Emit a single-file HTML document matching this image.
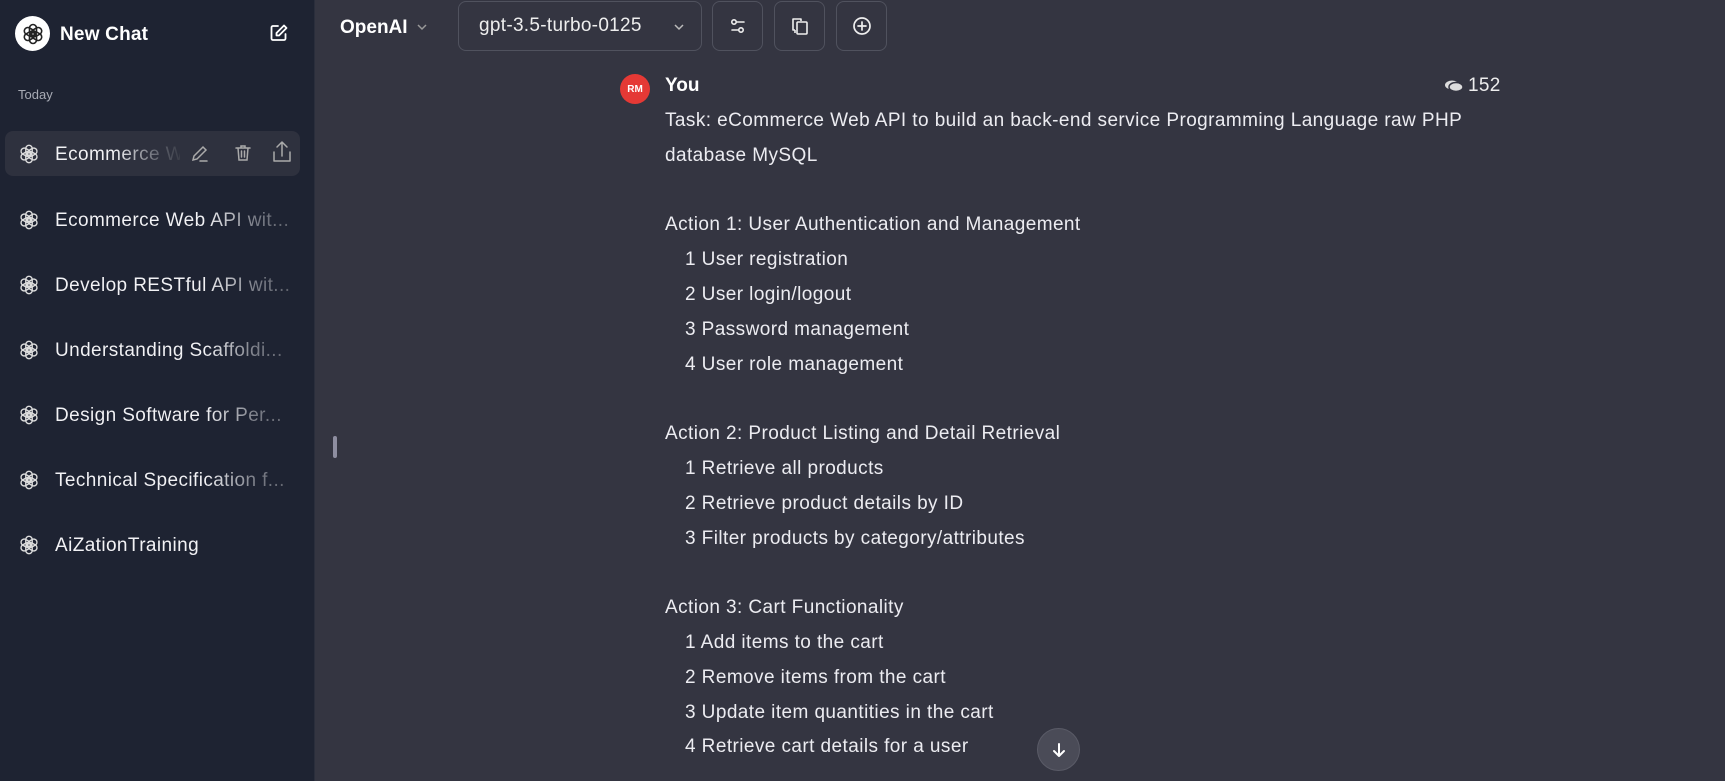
<!DOCTYPE html>
<html><head><meta charset="utf-8"><style>
*{box-sizing:border-box;margin:0;padding:0}
body{width:1725px;height:781px;overflow:hidden;background:#343541;font-family:"Liberation Sans",sans-serif;color:#ececf1;position:relative}
#side{position:absolute;left:0;top:0;width:315px;height:781px;background:#1e2332;border-right:1px solid #2a2e3c}
.logo{position:absolute;left:15px;top:16px;width:35px;height:35px;border-radius:50%;background:#fff;display:flex;align-items:center;justify-content:center}
.nc{position:absolute;left:60px;top:24px;font-size:19px;font-weight:bold;color:#fff;letter-spacing:0.2px}
.today{position:absolute;left:18px;top:87px;font-size:13px;color:#a8abb5}
.item{position:absolute;left:5px;width:295px;height:45px;border-radius:8px}
.item.act{background:#2e313e}
.item svg.oi{position:absolute;left:13px;top:12px}
.item .t{position:absolute;left:50px;top:13px;font-size:19px;letter-spacing:0.4px;white-space:nowrap;width:245px;overflow:hidden;background:linear-gradient(90deg,#f2f2f5 0,#f2f2f5 150px,#7b7e88 200px,#5b5e68 240px);-webkit-background-clip:text;background-clip:text;color:transparent}
.btn{position:absolute;top:1px;height:50px;border:1px solid #50525e;border-radius:8px;display:flex;align-items:center;justify-content:center}
.msg{position:absolute;left:665px;top:104px;font-size:19px;letter-spacing:0.42px;line-height:34.8px;color:#ececf1;white-space:pre}
.msg .i{padding-left:20px}
</style></head><body>
<div id="side">
 <div class="logo"><svg width="24" height="24" viewBox="0 0 24 24" fill="none" stroke="#222" stroke-width="1.6"><g id="g"><rect x="8.5" y="2.5" width="7" height="11" rx="3.5"/></g><use href="#g" transform="rotate(60 12 12)"/><use href="#g" transform="rotate(120 12 12)"/><use href="#g" transform="rotate(180 12 12)"/><use href="#g" transform="rotate(240 12 12)"/><use href="#g" transform="rotate(300 12 12)"/></svg></div>
 <div class="nc">New Chat</div>
 <svg style="position:absolute;left:269px;top:23px" width="20" height="20" viewBox="0 0 20 20" fill="none" stroke="#fff" stroke-width="1.8" stroke-linecap="round" stroke-linejoin="round"><path d="M9 3H4a1.5 1.5 0 0 0-1.5 1.5v11A1.5 1.5 0 0 0 4 17h11a1.5 1.5 0 0 0 1.5-1.5V11"/><path d="M15 2.5l2.5 2.5-7.5 7.5H7.5V10z"/></svg>
 <div class="today">Today</div>

 <div class="item act" style="top:131px"><svg class="oi" width="22" height="22" viewBox="0 0 24 24" fill="none" stroke="#ddd" stroke-width="1.5"><use href="#g"/><use href="#g" transform="rotate(60 12 12)"/><use href="#g" transform="rotate(120 12 12)"/><use href="#g" transform="rotate(180 12 12)"/><use href="#g" transform="rotate(240 12 12)"/><use href="#g" transform="rotate(300 12 12)"/></svg><div class="t" style="width:125px;background:linear-gradient(90deg,#f2f2f5 0,#f2f2f5 60px,#6b6e78 100px,#3a3d48 125px);-webkit-background-clip:text;background-clip:text">Ecommerce Web</div>
  <svg style="position:absolute;left:185px;top:13px" width="20" height="20" viewBox="0 0 20 20" fill="none" stroke="#aaa" stroke-width="1.5" stroke-linecap="round"><path d="M3 16l1-4 9-9 3 3-9 9z"/><path d="M10 17h7"/></svg>
  <svg style="position:absolute;left:228px;top:12px" width="20" height="20" viewBox="0 0 20 20" fill="none" stroke="#aaa" stroke-width="1.5" stroke-linecap="round"><path d="M3 5h14M8 5V3h4v2M5 5l1 12h8l1-12M8.5 8v6M11.5 8v6"/></svg>
  <svg style="position:absolute;left:266px;top:9px" width="22" height="24" viewBox="0 0 22 24" fill="none" stroke="#aaa" stroke-width="1.5" stroke-linecap="round" stroke-linejoin="round"><path d="M11 2v14M6 7l5-5 5 5M3 12v9h16v-9"/></svg>
 </div>
 <div class="item" style="top:197px"><svg class="oi" width="22" height="22" viewBox="0 0 24 24" fill="none" stroke="#ddd" stroke-width="1.5"><use href="#g"/><use href="#g" transform="rotate(60 12 12)"/><use href="#g" transform="rotate(120 12 12)"/><use href="#g" transform="rotate(180 12 12)"/><use href="#g" transform="rotate(240 12 12)"/><use href="#g" transform="rotate(300 12 12)"/></svg><div class="t">Ecommerce Web API wit...</div></div>
 <div class="item" style="top:262px"><svg class="oi" width="22" height="22" viewBox="0 0 24 24" fill="none" stroke="#ddd" stroke-width="1.5"><use href="#g"/><use href="#g" transform="rotate(60 12 12)"/><use href="#g" transform="rotate(120 12 12)"/><use href="#g" transform="rotate(180 12 12)"/><use href="#g" transform="rotate(240 12 12)"/><use href="#g" transform="rotate(300 12 12)"/></svg><div class="t">Develop RESTful API wit...</div></div>
 <div class="item" style="top:327px"><svg class="oi" width="22" height="22" viewBox="0 0 24 24" fill="none" stroke="#ddd" stroke-width="1.5"><use href="#g"/><use href="#g" transform="rotate(60 12 12)"/><use href="#g" transform="rotate(120 12 12)"/><use href="#g" transform="rotate(180 12 12)"/><use href="#g" transform="rotate(240 12 12)"/><use href="#g" transform="rotate(300 12 12)"/></svg><div class="t">Understanding Scaffoldi...</div></div>
 <div class="item" style="top:392px"><svg class="oi" width="22" height="22" viewBox="0 0 24 24" fill="none" stroke="#ddd" stroke-width="1.5"><use href="#g"/><use href="#g" transform="rotate(60 12 12)"/><use href="#g" transform="rotate(120 12 12)"/><use href="#g" transform="rotate(180 12 12)"/><use href="#g" transform="rotate(240 12 12)"/><use href="#g" transform="rotate(300 12 12)"/></svg><div class="t">Design Software for Per...</div></div>
 <div class="item" style="top:457px"><svg class="oi" width="22" height="22" viewBox="0 0 24 24" fill="none" stroke="#ddd" stroke-width="1.5"><use href="#g"/><use href="#g" transform="rotate(60 12 12)"/><use href="#g" transform="rotate(120 12 12)"/><use href="#g" transform="rotate(180 12 12)"/><use href="#g" transform="rotate(240 12 12)"/><use href="#g" transform="rotate(300 12 12)"/></svg><div class="t">Technical Specification f...</div></div>
 <div class="item" style="top:522px"><svg class="oi" width="22" height="22" viewBox="0 0 24 24" fill="none" stroke="#ddd" stroke-width="1.5"><use href="#g"/><use href="#g" transform="rotate(60 12 12)"/><use href="#g" transform="rotate(120 12 12)"/><use href="#g" transform="rotate(180 12 12)"/><use href="#g" transform="rotate(240 12 12)"/><use href="#g" transform="rotate(300 12 12)"/></svg><div class="t" style="background:none;color:#f2f2f5">AiZationTraining</div></div>
</div>

<div style="position:absolute;left:333px;top:436px;width:4px;height:22px;border-radius:2px;background:#8e8ea0"></div>

<div style="position:absolute;left:340px;top:17px;font-size:19px;font-weight:bold;color:#fff">OpenAI</div>
<svg style="position:absolute;left:416px;top:22px" width="12" height="10" viewBox="0 0 12 10" fill="none" stroke="#999" stroke-width="1.5"><path d="M2 3l4 4 4-4"/></svg>
<div class="btn" style="left:458px;width:244px;justify-content:flex-start;padding-left:20px;font-size:19px;letter-spacing:0.3px;color:#eee">gpt-3.5-turbo-0125
 <svg style="position:absolute;right:16px;top:20px" width="12" height="10" viewBox="0 0 12 10" fill="none" stroke="#bbb" stroke-width="1.5"><path d="M2 3l4 4 4-4"/></svg></div>
<div class="btn" style="left:712px;width:51px"><svg width="20" height="20" viewBox="0 0 20 20" fill="none" stroke="#eee" stroke-width="1.6" stroke-linecap="round"><circle cx="6" cy="6" r="2.2"/><path d="M8.2 6H16"/><circle cx="13" cy="14" r="2.2"/><path d="M4 14h6.8"/></svg></div>
<div class="btn" style="left:774px;width:51px"><svg width="22" height="22" viewBox="0 0 22 22" fill="none" stroke="#eee" stroke-width="1.6" stroke-linejoin="round"><path d="M6 15H4V4h8v2"/><rect x="8" y="7" width="10" height="12" rx="1"/><path d="M6 15v3"/></svg></div>
<div class="btn" style="left:836px;width:51px"><svg width="22" height="22" viewBox="0 0 22 22" fill="none" stroke="#eee" stroke-width="1.7" stroke-linecap="round"><circle cx="11" cy="11" r="8"/><path d="M11 7v8M7 11h8"/></svg></div>

<div style="position:absolute;left:620px;top:74px;width:30px;height:30px;border-radius:50%;background:#e53935;color:#fff;font-size:10px;font-weight:bold;display:flex;align-items:center;justify-content:center">RM</div>
<div style="position:absolute;left:665px;top:75px;font-size:19px;font-weight:bold;color:#fff">You</div>
<svg style="position:absolute;left:1444px;top:79px" width="20" height="14" viewBox="0 0 20 14"><ellipse cx="8" cy="6" rx="7" ry="4.5" fill="#ddd"/><ellipse cx="12" cy="8" rx="7" ry="4.5" fill="#ddd" stroke="#343541" stroke-width="1.5"/></svg>
<div style="position:absolute;left:1468px;top:75px;font-size:19px;letter-spacing:0.3px;color:#eee">152</div>

<div class="msg">Task: eCommerce Web API to build an back-end service Programming Language raw PHP
database MySQL

Action 1: User Authentication and Management
<span class="i">1 User registration</span>
<span class="i">2 User login/logout</span>
<span class="i">3 Password management</span>
<span class="i">4 User role management</span>

Action 2: Product Listing and Detail Retrieval
<span class="i">1 Retrieve all products</span>
<span class="i">2 Retrieve product details by ID</span>
<span class="i">3 Filter products by category/attributes</span>

Action 3: Cart Functionality
<span class="i">1 Add items to the cart</span>
<span class="i">2 Remove items from the cart</span>
<span class="i">3 Update item quantities in the cart</span>
<span class="i">4 Retrieve cart details for a user</span></div>

<div style="position:absolute;left:1037px;top:728px;width:43px;height:43px;border-radius:50%;background:#4a4b57;border:1px solid #5a5b67;display:flex;align-items:center;justify-content:center"><svg width="18" height="18" viewBox="0 0 18 18" fill="none" stroke="#fff" stroke-width="2" stroke-linecap="round" stroke-linejoin="round"><path d="M9 3v12M4 10l5 5 5-5"/></svg></div>
</body></html>
